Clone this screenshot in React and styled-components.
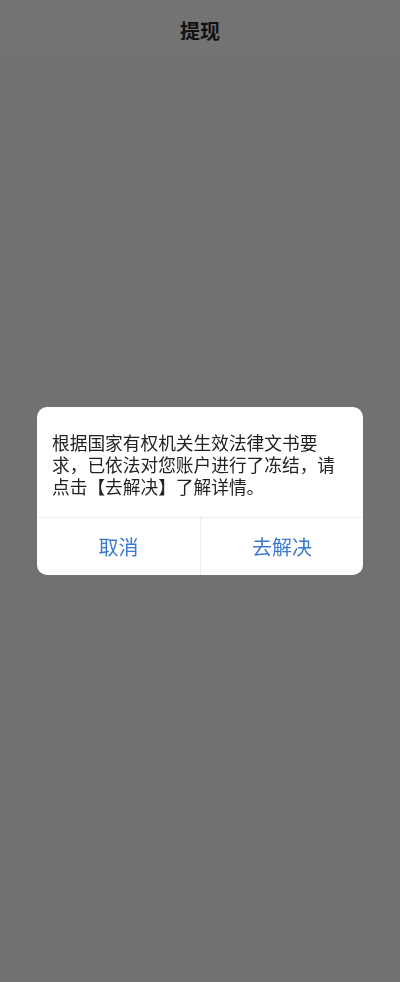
import React from "react";
import styled, { createGlobalStyle } from "styled-components";

const GlobalStyle = createGlobalStyle`
  html, body {
    margin: 0;
    padding: 0;
    background: #717171;
    font-family: "Liberation Sans", "Noto Sans CJK SC", sans-serif;
  }
`;

const Page = styled.div`
  min-height: 100vh;
  background: #717171;
`;

const Header = styled.header`
  height: 57px;
  display: flex;
  align-items: center;
  justify-content: center;
  background: #737373;
  border-bottom: 1px solid #6b6b6b;
`;

const Title = styled.h1`
  margin: 0;
  padding-top: 4px;
  font-size: 20px;
  font-weight: 700;
  color: #111;
`;

const Overlay = styled.div`
  position: fixed;
  inset: 0;
  display: flex;
  align-items: center;
  justify-content: center;
`;

const Dialog = styled.div`
  width: 326px;
  background: #fff;
  border-radius: 10px;
  overflow: hidden;
`;

const Message = styled.p`
  margin: 0;
  padding: 26px 15px 18px 15px;
  font-size: 17.7px;
  line-height: 22px;
  color: #222;
`;

const Actions = styled.div`
  display: grid;
  grid-template-columns: 1fr 1fr;
  border-top: 1px solid #ededed;
`;

const ActionButton = styled.button`
  height: 57px;
  border: none;
  background: none;
  font-family: inherit;
  font-size: 20px;
  color: #3a79cf;
  padding: 0;
  & + & {
    border-left: 1px solid #ededed;
  }
`;

export default function App() {
  return (
    <Page>
      <GlobalStyle />
      <Header>
        <Title>提现</Title>
      </Header>
      <Overlay>
        <Dialog>
          <Message>
            根据国家有权机关生效法律文书要求，已依法对您账户进行了冻结，请点击【去解决】了解详情。
          </Message>
          <Actions>
            <ActionButton>取消</ActionButton>
            <ActionButton>去解决</ActionButton>
          </Actions>
        </Dialog>
      </Overlay>
    </Page>
  );
}
